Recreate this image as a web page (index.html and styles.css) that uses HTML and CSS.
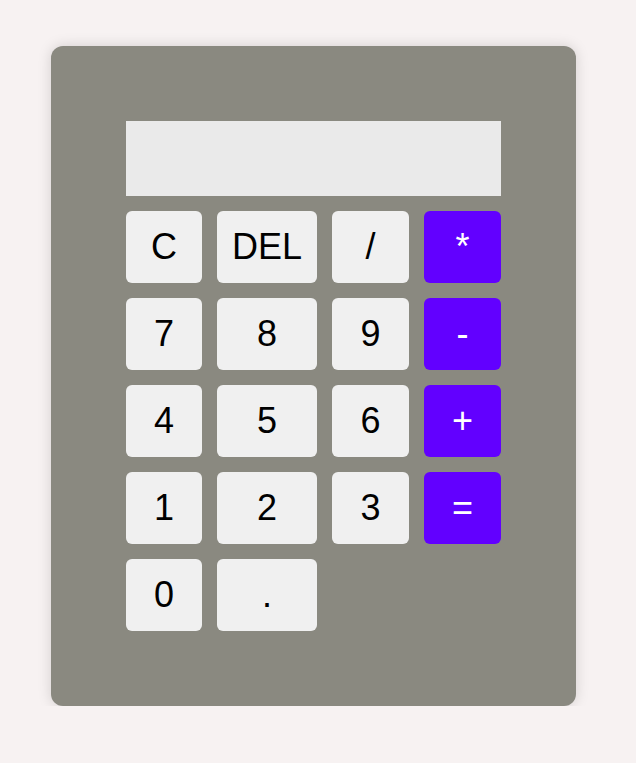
FILE: index.html
```html
<!DOCTYPE html>
<html>
<head>
<meta charset="utf-8">
<link rel="stylesheet" href="styles.css">
</head>
<body>
<div class="calc">
  <div class="display"></div>
  <div class="keys">
    <button class="key">C</button>
    <button class="key">DEL</button>
    <button class="key">/</button>
    <button class="key op">*</button>
    <button class="key">7</button>
    <button class="key">8</button>
    <button class="key">9</button>
    <button class="key op">-</button>
    <button class="key">4</button>
    <button class="key">5</button>
    <button class="key">6</button>
    <button class="key op">+</button>
    <button class="key">1</button>
    <button class="key">2</button>
    <button class="key">3</button>
    <button class="key op">=</button>
    <button class="key">0</button>
    <button class="key">.</button>
  </div>
</div>
</body>
</html>
```
FILE: styles.css
```css
html, body {
  margin: 0;
  padding: 0;
  background: #f7f2f2;
  font-family: "Liberation Sans", Arial, sans-serif;
}
body {
  padding: 46px 0 0 51px;
}
.calc {
  width: 375px;
  padding: 75px;
  background: #8a8980;
  border-radius: 12px;
  box-shadow: 0 0 14px rgba(0, 0, 0, 0.15);
  display: flex;
  flex-direction: column;
  gap: 15px;
}
.display {
  height: 75px;
  background: #eaeaea;
}
.keys {
  display: grid;
  grid-template-columns: 76px 100px 77px 77px;
  grid-auto-rows: 72px;
  gap: 15px;
}
.key {
  border: none;
  border-radius: 6px;
  background: #f0f0f0;
  color: #000;
  font-family: "Liberation Sans", Arial, sans-serif;
  font-size: 36px;
  padding: 0;
  margin: 0;
}
.key.op {
  background: #6200ff;
  color: #fff;
}
```
